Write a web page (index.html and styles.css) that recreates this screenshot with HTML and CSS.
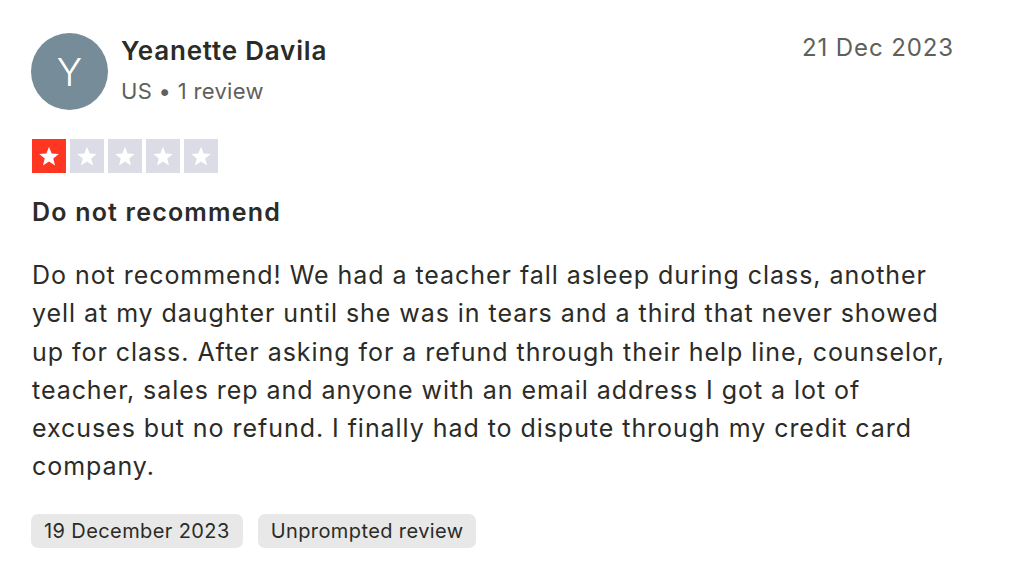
FILE: index.html
```html
<!DOCTYPE html>
<html>
<head>
<meta charset="utf-8">
<link rel="stylesheet" href="styles.css">
</head>
<body>
<article class="review">
  <header class="head">
    <div class="avatar">Y</div>
    <div class="who">
      <div class="name">Yeanette Davila</div>
      <div class="meta">US • 1 review</div>
    </div>
    <div class="date">21 Dec 2023</div>
  </header>
  <div class="stars">
    <span class="star on"><svg viewBox="0 0 24 24"><path d="M12 3.5l2.4 6.2 6.6.4-5.1 4.2 1.7 6.4L12 17.1l-5.6 3.6 1.7-6.4L3 10.1l6.6-.4z"/></svg></span>
    <span class="star"><svg viewBox="0 0 24 24"><path d="M12 3.5l2.4 6.2 6.6.4-5.1 4.2 1.7 6.4L12 17.1l-5.6 3.6 1.7-6.4L3 10.1l6.6-.4z"/></svg></span>
    <span class="star"><svg viewBox="0 0 24 24"><path d="M12 3.5l2.4 6.2 6.6.4-5.1 4.2 1.7 6.4L12 17.1l-5.6 3.6 1.7-6.4L3 10.1l6.6-.4z"/></svg></span>
    <span class="star"><svg viewBox="0 0 24 24"><path d="M12 3.5l2.4 6.2 6.6.4-5.1 4.2 1.7 6.4L12 17.1l-5.6 3.6 1.7-6.4L3 10.1l6.6-.4z"/></svg></span>
    <span class="star"><svg viewBox="0 0 24 24"><path d="M12 3.5l2.4 6.2 6.6.4-5.1 4.2 1.7 6.4L12 17.1l-5.6 3.6 1.7-6.4L3 10.1l6.6-.4z"/></svg></span>
  </div>
  <h2 class="title">Do not recommend</h2>
  <p class="text">Do not recommend! We had a teacher fall asleep during class, another yell at my daughter until she was in tears and a third that never showed up for class. After asking for a refund through their help line, counselor, teacher, sales rep and anyone with an email address I got a lot of excuses but no refund. I finally had to dispute through my credit card company.</p>
  <div class="tags">
    <span class="tag">19 December 2023</span>
    <span class="tag">Unprompted review</span>
  </div>
</article>
</body>
</html>
```

FILE: styles.css
```css
html, body {
  margin: 0;
  padding: 0;
  background: #ffffff;
}
body {
  font-family: Inter, "Noto Sans", sans-serif;
  color: #2b2b27;
  width: 1024px;
  height: 583px;
  overflow: hidden;
}
.review {
  padding: 33px 70px 0 31px;
}
.head {
  display: flex;
  align-items: flex-start;
}
.avatar {
  width: 77px;
  height: 77px;
  border-radius: 50%;
  background: #768c99;
  color: #ffffff;
  font-size: 38px;
  font-weight: 300;
  display: flex;
  align-items: center;
  justify-content: center;
  flex: none;
}
.who {
  margin-left: 13px;
  flex: 1;
}
.name {
  font-size: 26px;
  font-weight: 600;
  line-height: 36px;
  letter-spacing: 0.8px;
}
.meta {
  font-size: 22px;
  line-height: 36px;
  color: #5f5f5b;
  letter-spacing: 0.3px;
  margin-top: 4px;
}
.date {
  font-size: 24px;
  color: #5f5f5b;
  line-height: 30px;
  letter-spacing: 0.9px;
  margin-top: 0;
}
.stars {
  display: flex;
  gap: 4px;
  margin-top: 29px;
  margin-left: 1px;
}
.star {
  width: 34px;
  height: 34px;
  background: #dcdce6;
  display: flex;
  align-items: center;
  justify-content: center;
}
.star.on {
  background: #ff3722;
}
.star svg {
  width: 26px;
  height: 26px;
  fill: #ffffff;
}
.title {
  font-size: 25px;
  font-weight: 600;
  letter-spacing: 1.2px;
  margin: 24px 0 0 1px;
  line-height: 30px;
}
.text {
  font-size: 25px;
  letter-spacing: 0.95px;
  line-height: 38.3px;
  margin: 29px 0 0 1px;
}
.tags {
  display: flex;
  gap: 15px;
  margin-top: 28px;
}
.tag {
  background: #e8e8e8;
  border-radius: 7px;
  font-size: 20px;
  letter-spacing: 0.4px;
  line-height: 34px;
  padding: 0 13px;
}
```
